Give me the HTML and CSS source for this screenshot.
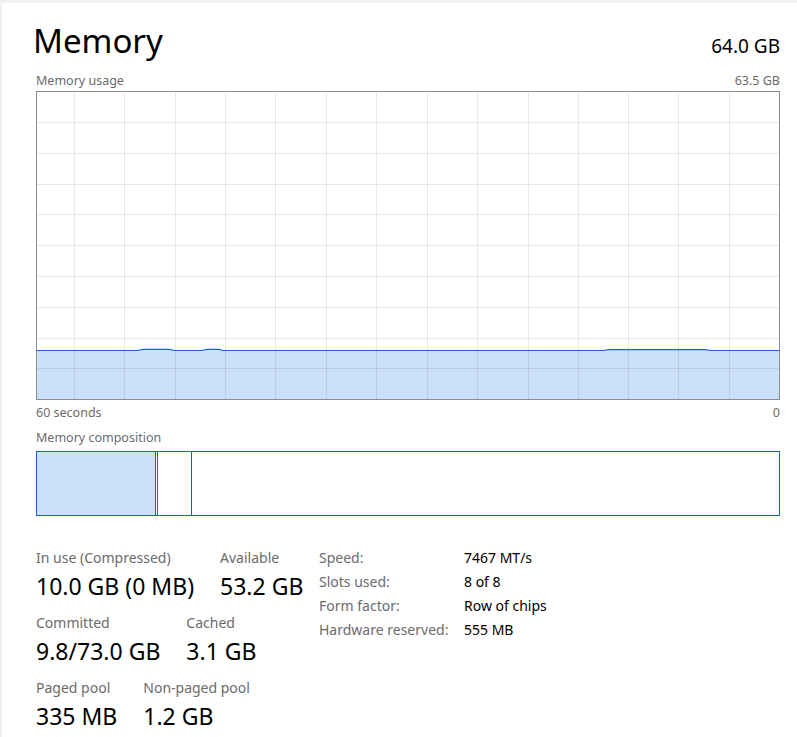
FILE: index.html
```html
<!DOCTYPE html>
<html lang="en">
<head>
    <meta charset="UTF-8">
    <meta name="viewport" content="width=device-width, initial-scale=1.0">
    <title>Memory</title>
    <link rel="stylesheet" href="styles.css">
</head>
<body>

    <div class="window">
        <div class="header">
            <h1 class="title">Memory</h1>
            <span class="total">64.0 GB</span>
        </div>

        <div class="caption">
            <span>Memory usage</span>
            <span>63.5 GB</span>
        </div>

        <!-- usage over the last 60 seconds -->
        <div class="chart">
            <svg width="742" height="307" viewBox="0 0 742 307">
                <path class="area" d="M0 258.5 L100 258.5 L106 257.4 L132 257.4 L138 258.5 L164 258.5 L170 257.4 L182 257.4 L186 258.5 L566 258.5 L572 257.6 L668 257.6 L674 258.5 L742 258.5 L742 307 L0 307 Z"/>
                <g class="grid">
                    <line x1="0" y1="30.5" x2="742" y2="30.5"/>
                    <line x1="0" y1="61.5" x2="742" y2="61.5"/>
                    <line x1="0" y1="92.5" x2="742" y2="92.5"/>
                    <line x1="0" y1="122.5" x2="742" y2="122.5"/>
                    <line x1="0" y1="153.5" x2="742" y2="153.5"/>
                    <line x1="0" y1="184.5" x2="742" y2="184.5"/>
                    <line x1="0" y1="215.5" x2="742" y2="215.5"/>
                    <line x1="0" y1="246.5" x2="742" y2="246.5"/>
                    <line x1="0" y1="276.5" x2="742" y2="276.5"/>
                    <line x1="37.5" y1="0" x2="37.5" y2="307"/>
                    <line x1="87.5" y1="0" x2="87.5" y2="307"/>
                    <line x1="138.5" y1="0" x2="138.5" y2="307"/>
                    <line x1="188.5" y1="0" x2="188.5" y2="307"/>
                    <line x1="238.5" y1="0" x2="238.5" y2="307"/>
                    <line x1="289.5" y1="0" x2="289.5" y2="307"/>
                    <line x1="339.5" y1="0" x2="339.5" y2="307"/>
                    <line x1="390.5" y1="0" x2="390.5" y2="307"/>
                    <line x1="440.5" y1="0" x2="440.5" y2="307"/>
                    <line x1="491.5" y1="0" x2="491.5" y2="307"/>
                    <line x1="541.5" y1="0" x2="541.5" y2="307"/>
                    <line x1="591.5" y1="0" x2="591.5" y2="307"/>
                    <line x1="641.5" y1="0" x2="641.5" y2="307"/>
                    <line x1="692.5" y1="0" x2="692.5" y2="307"/>
                </g>
                <path class="trace" d="M0 258.5 L100 258.5 L106 257.4 L132 257.4 L138 258.5 L164 258.5 L170 257.4 L182 257.4 L186 258.5 L566 258.5 L572 257.6 L668 257.6 L674 258.5 L742 258.5"/>
            </svg>
        </div>

        <div class="caption axis">
            <span>60 seconds</span>
            <span>0</span>
        </div>

        <div class="caption">
            <span>Memory composition</span>
        </div>

        <div class="composition">
            <div class="seg in-use"></div>
            <div class="seg modified"></div>
            <div class="seg standby"></div>
            <div class="seg free"></div>
        </div>

        <div class="stats">
            <div class="stats-main">
                <div class="stat-row">
                    <div class="stat">
                        <div class="stat-label">In use (Compressed)</div>
                        <div class="stat-value">10.0 GB (0 MB)</div>
                    </div>
                    <div class="stat">
                        <div class="stat-label">Available</div>
                        <div class="stat-value">53.2 GB</div>
                    </div>
                </div>
                <div class="stat-row">
                    <div class="stat">
                        <div class="stat-label">Committed</div>
                        <div class="stat-value">9.8/73.0 GB</div>
                    </div>
                    <div class="stat">
                        <div class="stat-label">Cached</div>
                        <div class="stat-value">3.1 GB</div>
                    </div>
                </div>
                <div class="stat-row">
                    <div class="stat">
                        <div class="stat-label">Paged pool</div>
                        <div class="stat-value">335 MB</div>
                    </div>
                    <div class="stat">
                        <div class="stat-label">Non-paged pool</div>
                        <div class="stat-value">1.2 GB</div>
                    </div>
                </div>
            </div>

            <dl class="details">
                <dt>Speed:</dt>
                <dd>7467 MT/s</dd>
                <dt>Slots used:</dt>
                <dd>8 of 8</dd>
                <dt>Form factor:</dt>
                <dd>Row of chips</dd>
                <dt>Hardware reserved:</dt>
                <dd>555 MB</dd>
            </dl>
        </div>
    </div>

</body>
</html>
```

FILE: styles.css
```css
body {
    margin: 0;
    background: #fff;
    font-family: "Segoe UI", "Noto Sans", sans-serif;
    color: #000;
}
.window {
    border-top: 3px solid #f0f0f0;
    border-left: 2px solid #f0f0f0;
    padding: 0 17px 0 34px;
    height: 734px;
    overflow: hidden;
}
.header {
    display: flex;
    justify-content: space-between;
    align-items: baseline;
    padding-top: 18px;
    height: 43px;
}
.title {
    margin: 0 0 0 -3px;
    font-size: 33px;
    font-weight: 400;
    line-height: 40px;
}
.total {
    font-size: 19px;
}
.caption {
    display: flex;
    justify-content: space-between;
    font-size: 12.5px;
    line-height: 16px;
    height: 16px;
    color: #6b6b6b;
    margin-top: 9px;
}
.chart {
    margin-top: 2px;
    border: 1px solid #8c8c8c;
    height: 307px;
    line-height: 0;
}
.chart svg {
    display: block;
}
.area {
    fill: #cce0fc;
}
.grid line {
    stroke: rgba(0, 0, 0, 0.09);
    stroke-width: 1;
}
.trace {
    fill: none;
    stroke: #1665d8;
    stroke-width: 1.2;
}
.axis {
    margin-top: 5px;
}
.composition {
    display: flex;
    margin-top: 5px;
    height: 63px;
    border: 1px solid #1a5fd0;
}
.seg {
    border-right: 1px solid #1a5fd0;
}
.in-use {
    width: 118px;
    background: #cce0fc;
}
.modified {
    width: 1px;
}
.standby {
    width: 33px;
}
.free {
    flex: 1;
    border-right: none;
}
.stats {
    display: flex;
    margin-top: 32px;
}
.stats-main {
    flex: 0 0 283px;
}
.stat-row {
    display: flex;
    gap: 26px;
    margin-bottom: 9px;
}
.stat-label {
    font-size: 14px;
    line-height: 20px;
    color: #6b6b6b;
}
.stat-value {
    font-size: 23px;
    line-height: 36px;
}
.details {
    display: grid;
    grid-template-columns: 145px auto;
    grid-auto-rows: 24px;
    margin: 0;
    font-size: 14px;
    line-height: 20px;
}
.details dt {
    color: #6b6b6b;
}
.details dd {
    margin: 0;
}
```
